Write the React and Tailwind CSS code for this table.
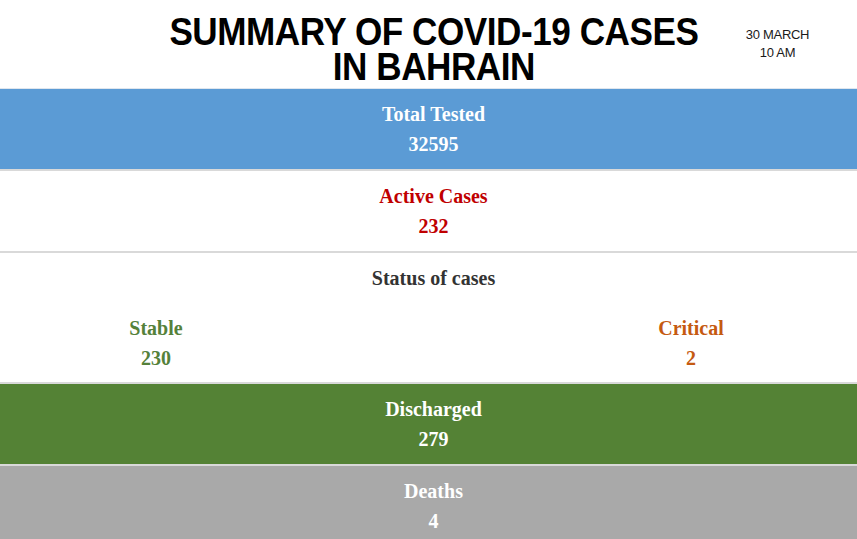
export default function App() {
  const serif = { fontFamily: '"Liberation Serif", "Times New Roman", serif' };
  const sans = { fontFamily: '"Liberation Sans", Arial, sans-serif' };

  const Band = ({ bg, color, label, value }) => (
    <div className={`h-[80px] flex flex-col items-center justify-center pl-[10px] ${bg} ${color}`}>
      <p className="text-[20px] font-bold leading-[30px]">{label}</p>
      <p className="text-[20px] font-bold leading-[30px]">{value}</p>
    </div>
  );

  return (
    <div className="w-[857px] h-[539px] overflow-hidden bg-white" style={serif}>
      {/* Header */}
      <div className="relative h-[89px] flex flex-col items-center pt-[14px] pl-[10px] border-b border-[#dfe6ee]">
        <h1
          className="text-[39px] font-bold leading-[35px] text-black text-center tracking-[-0.5px] scale-x-[0.9] origin-center"
          style={sans}
        >
          SUMMARY OF COVID-19 CASES
          <br />
          IN BAHRAIN
        </h1>
        <div
          className="absolute left-[740px] top-[26px] w-[75px] text-center text-[13px] leading-[18px] text-[#1a1a1a] tracking-[-0.3px]"
          style={sans}
        >
          30 MARCH
          <br />
          10 AM
        </div>
      </div>

      <Band bg="bg-[#5b9bd5]" color="text-white" label="Total Tested" value="32595" />
      <div className="h-[2px] bg-[#d9d9d9]" />

      <Band bg="bg-white" color="text-[#c00000]" label="Active Cases" value="232" />
      <div className="h-[2px] bg-[#d9d9d9]" />

      {/* Status of cases */}
      <div className="h-[129px] bg-white pt-[10px]">
        <p className="text-[20px] font-bold leading-[30px] text-center pl-[10px] text-[#333333]">Status of cases</p>
        <div className="flex justify-between pl-[106px] pr-[116px] mt-[20px]">
          <div className="w-[100px] text-center text-[#55813a]">
            <p className="text-[20px] font-bold leading-[30px]">Stable</p>
            <p className="text-[20px] font-bold leading-[30px]">230</p>
          </div>
          <div className="w-[100px] text-center text-[#c55a11]">
            <p className="text-[20px] font-bold leading-[30px]">Critical</p>
            <p className="text-[20px] font-bold leading-[30px]">2</p>
          </div>
        </div>
      </div>
      <div className="h-[2px] bg-[#d9d9d9]" />

      <Band bg="bg-[#548235]" color="text-white" label="Discharged" value="279" />
      <div className="h-[2px] bg-[#d9d9d9]" />

      <Band bg="bg-[#a9a9a9]" color="text-white" label="Deaths" value="4" />
    </div>
  );
}
